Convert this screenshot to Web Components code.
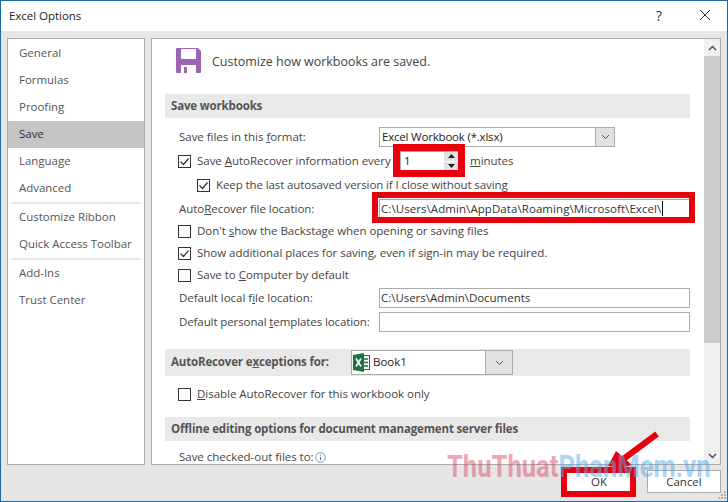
<!DOCTYPE html>
<html>
<head>
<meta charset="utf-8">
<title>Excel Options</title>
<style>
  html, body { margin: 0; padding: 0; background: #e6e6e6; overflow: hidden; }
  body { font: 11.5px "Open Sans", "Noto Sans", sans-serif; letter-spacing: -.03px; color: #444; }
</style>
</head>
<body>
<excel-dialog>
  <nav-list slot="nav">
    <nav-item>General</nav-item>
    <nav-item>Formulas</nav-item>
    <nav-item>Proofing</nav-item>
    <nav-item active>Save</nav-item>
    <nav-item>Language</nav-item>
    <nav-item>Advanced</nav-item>
    <nav-sep></nav-sep>
    <nav-item>Customize Ribbon</nav-item>
    <nav-item>Quick Access Toolbar</nav-item>
    <nav-sep></nav-sep>
    <nav-item>Add-Ins</nav-item>
    <nav-item>Trust Center</nav-item>
  </nav-list>

  <page-head>Customize how workbooks are saved.</page-head>

  <section-bar style="margin-top:21px">Save workbooks</section-bar>

  <form-row style="margin-top:9px;height:20px">
    <span>Save files in this <u>f</u>ormat:</span>
    <combo-box slot="control" style="width:236px">Excel Workbook (*.xlsx)</combo-box>
  </form-row>
  <check-row checked label-width="197" style="margin-top:2px;height:24px">
    Save <u>A</u>utoRecover information every
    <spin-box slot="after" value="1"></spin-box>
    <span slot="after" style="margin-left:10px;padding-bottom:2px"><u>m</u>inutes</span>
  </check-row>
  <check-row checked indent style="height:24px;letter-spacing:-.1px">Keep the last autosaved version if I close without saving</check-row>
  <form-row style="height:24px">
    <span>Auto<u>R</u>ecover file location:</span>
    <text-box slot="control" caret style="letter-spacing:.07px">C:\Users\Admin\AppData\Roaming\Microsoft\Excel\</text-box>
  </form-row>
  <check-row style="height:22px;margin-top:-1px">Don't <u>s</u>how the Backstage when opening or saving files</check-row>
  <check-row checked style="height:22px">Show additional places for saving, even if sign-in may be required.</check-row>
  <check-row style="height:22px">Save to <u>C</u>omputer by default</check-row>
  <form-row style="height:24px">
    <span>Default local f<u>i</u>le location:</span>
    <text-box slot="control">C:\Users\Admin\Documents</text-box>
  </form-row>
  <form-row style="height:24px">
    <span style="letter-spacing:-.1px">Default personal <u>t</u>emplates location:</span>
    <text-box slot="control"></text-box>
  </form-row>

  <section-bar tall style="margin-top:15px">
    <span>AutoRecover e<u>x</u>ceptions for:</span>
    <combo-box slot="control" workbook style="width:162px">Book1</combo-box>
  </section-bar>
  <check-row style="margin-top:7px;height:22px">
    <u>D</u>isable AutoRecover for this workbook only
  </check-row>
  <section-bar style="margin-top:12px">Offline editing options for document management server files</section-bar>
  <form-row style="margin-top:6px;height:20px">
    <span>Save checked-out files to:<info-icon></info-icon></span>
  </form-row>

  <dialog-button slot="buttons" style="margin-right:11px">OK</dialog-button>
  <dialog-button slot="buttons">Cancel</dialog-button>

  <red-box slot="marks" style="left:392px;top:143px;width:72px;height:33px;border-width:7px"></red-box>
  <red-box slot="marks" style="left:371px;top:191px;width:323px;height:31px"></red-box>
  <red-box slot="marks" style="left:560px;top:466px;width:75px;height:30px"></red-box>
  <red-arrow slot="marks"></red-arrow>
  <water-mark slot="marks"></water-mark>
  <size-grip slot="marks"></size-grip>
</excel-dialog>

<script>
// little helper, every element is the same boilerplate otherwise
function define(name, html) {
  customElements.define(name, class extends HTMLElement {
    constructor() {
      super();
      this.attachShadow({ mode: "open" });
      this.shadowRoot.innerHTML = typeof html === "function" ? html(this) : html;
    }
  });
}

define("excel-dialog", `
  <style>
    :host { display: block; position: relative; width: 728px; height: 502px; box-sizing: border-box;
      border: 1px solid #1f6aa5; background: #e6e6e6; overflow: hidden; }
    .title { height: 30px; box-sizing: border-box; padding: 0 0 2px 8px; background: #fff; display: flex; align-items: center; color: #222; }
    .title span { flex: 1; }
    .title b { font-weight: 400; width: 40px; text-align: center; color: #333; font-size: 14px; }
    .title svg { display: block; margin: 0 16px 0 20px; }
    .main { display: flex; gap: 6px; padding: 7px 6px 0 6px; height: 427px; }
    .nav { width: 138px; flex: none; background: #fff; border: 1px solid #ababab; box-sizing: border-box; }
    .content { flex: 1; background: #fff; border: 1px solid #ababab; box-sizing: border-box; display: flex; overflow: hidden; }
    .scroll { flex: 1; overflow: hidden; padding: 0 14px 0 13px; min-width: 0; }
    .bar { width: 16px; flex: none; background: #f0f0f0; display: flex; flex-direction: column; }
    .arrow { height: 17px; display: flex; align-items: center; justify-content: center; }
    .thumb { height: 287px; background: #cdcdcd; }
    .rest { flex: 1; }
    .buttons { display: flex; justify-content: flex-end; padding: 5px 6px 0 0; }
  </style>
  <div class="title"><span>Excel Options</span><b>?</b>
    <svg width="12" height="12" viewBox="0 0 12 12"><path d="M1 1l10 10M11 1L1 11" stroke="#333" stroke-width="1" fill="none"/></svg>
  </div>
  <div class="main">
    <div class="nav"><slot name="nav"></slot></div>
    <div class="content">
      <div class="scroll"><slot></slot></div>
      <div class="bar">
        <div class="arrow"><svg width="9" height="6" viewBox="0 0 9 6"><path d="M1 5l3.500-3.500L8 5" stroke="#555" stroke-width="1.500" fill="none"/></svg></div>
        <div class="thumb"></div>
        <div class="rest"></div>
        <div class="arrow"><svg width="9" height="6" viewBox="0 0 9 6"><path d="M1 1l3.500 3.500L8 1" stroke="#555" stroke-width="1.500" fill="none"/></svg></div>
      </div>
    </div>
  </div>
  <div class="buttons"><slot name="buttons"></slot></div>
  <slot name="marks"></slot>
`);

define("nav-list", `<style>:host { display: block; padding-top: 1px; }</style><slot></slot>`);

define("nav-item", `
  <style>
    :host { display: flex; align-items: center; height: 27px; box-sizing: border-box; padding: 0 0 2px 11px; color: #555; }
    :host([active]) { background: #c5c5c5; color: #333; }
  </style><slot></slot>`);

define("nav-sep", `<style>:host { display: block; height: 2px; margin: 0 3px; background: #e6e6e6; }</style>`);

define("page-head", `
  <style>
    :host { display: flex; align-items: center; gap: 11px; height: 26px; margin-top: 8px; padding-left: 11px;
      font-size: 12.5px; color: #444; }
    svg { display: block; flex: none; }
    span { padding-top: 2px; }
  </style>
  <svg width="25" height="25" viewBox="0 0 25 25">
    <path d="M1 0h21l3 3v21a1 1 0 0 1-1 1H1a1 1 0 0 1-1-1V1a1 1 0 0 1 1-1z" fill="#9c65b4"/>
    <rect x="5" y="1" width="15" height="10" fill="#fff"/>
    <rect x="5" y="17" width="15" height="8" fill="#fff"/>
    <rect x="8" y="19" width="3" height="6" fill="#9c65b4"/>
  </svg>
  <span><slot></slot></span>`);

define("section-bar", `
  <style>
    :host { display: flex; align-items: center; height: 24px; padding-left: 6px; background: #e9e9e9;
      font-weight: 700; letter-spacing: -.15px; color: #555; }
    :host([tall]) { height: 27px; }
    .label { flex: none; padding-bottom: 2px; }
    :host([tall]) .label { width: 180px; }
  </style>
  <div class="label"><slot></slot></div><slot name="control"></slot>`);

define("form-row", `
  <style>
    :host { display: flex; align-items: center; padding-left: 14px; color: #444; }
    .label { width: 200px; flex: none; white-space: nowrap; padding-bottom: 2px; }
    .ctl { flex: 1; display: flex; min-width: 0; }
  </style>
  <div class="label"><slot></slot></div><div class="ctl"><slot name="control"></slot></div>`);

define("check-row", el => `
  <style>
    :host { display: flex; align-items: center; gap: 6px; padding-left: ${el.hasAttribute("indent") ? 32 : 13}px; white-space: nowrap; color: #444; }
    svg { display: block; flex: none; }
    .label { flex: none; padding-bottom: 2px; ${el.hasAttribute("label-width") ? "width:" + el.getAttribute("label-width") + "px;" : ""} }
    .after { display: flex; align-items: center; }
  </style>
  <svg width="13" height="13" viewBox="0 0 13 13">
    <rect x=".5" y=".5" width="12" height="12" fill="#fff" stroke="#333"/>
    ${el.hasAttribute("checked") ? '<path d="M2.500 6.500l3 3 5-6" stroke="#333" stroke-width="1.200" fill="none"/>' : ""}
  </svg>
  <span class="label"><slot></slot></span><div class="after"><slot name="after"></slot></div>`);

define("combo-box", el => `
  <style>
    :host { display: flex; align-items: center; height: 20px; box-sizing: border-box; border: 1px solid #ababab;
      background: #fff; color: #222; font-weight: 400; letter-spacing: -.2px; }
    :host([workbook]) { height: 25px; letter-spacing: 0; }
    .text { flex: 1; padding-left: 2px; display: flex; align-items: center; gap: 3px; white-space: nowrap; }
    .text span { padding-bottom: 2px; }
    :host([workbook]) .text { padding-left: 1px; }
    .btn { width: 18px; align-self: stretch; background: #e1e1e1; border-left: 1px solid #ababab; display: flex; align-items: center; justify-content: center; }
    :host([workbook]) .btn { width: 26px; }
    svg { display: block; }
  </style>
  <div class="text">
    ${el.hasAttribute("workbook") ? `<svg width="17" height="19" viewBox="0 0 17 19">
      <rect x="9.500" y="2.500" width="7" height="14" fill="#fff" stroke="#207245"/>
      <path d="M11 6h4M11 9.500h4M11 13h4" stroke="#207245" stroke-width="1.500"/>
      <path d="M0 2l11-2v19L0 17z" fill="#207245"/>
      <path d="M3 5.500l5 8M8 5.500l-5 8" stroke="#fff" stroke-width="1.600" fill="none"/>
    </svg>` : ""}
    <span><slot></slot></span>
  </div>
  <div class="btn"><svg width="9" height="6" viewBox="0 0 9 6"><path d="M1 1l3.500 3.500L8 1" stroke="#555" fill="none"/></svg></div>`);

define("spin-box", el => `
  <style>
    :host { display: flex; align-items: center; width: 60px; height: 21px; box-sizing: border-box; border: 1px solid #ababab; background: #fff; color: #222; }
    .v { flex: 1; padding: 0 0 2px 3px; }
    .btns { width: 15px; align-self: stretch; display: flex; flex-direction: column; gap: 1px; background: #fff; }
    .btns div { flex: 1; background: #e1e1e1; display: flex; align-items: center; justify-content: center; }
    svg { display: block; }
  </style>
  <div class="v">${el.getAttribute("value")}</div>
  <div class="btns">
    <div><svg width="7" height="4" viewBox="0 0 7 4"><path d="M3.500 0L7 4H0z" fill="#222"/></svg></div>
    <div><svg width="7" height="4" viewBox="0 0 7 4"><path d="M3.500 4L7 0H0z" fill="#222"/></svg></div>
  </div>`);

define("text-box", el => `
  <style>
    :host { display: flex; align-items: center; flex: 1; height: 20px; box-sizing: border-box; border: 1px solid #ababab; background: #fff; color: #333; padding: 0 0 2px 1px; white-space: nowrap; }
    i { display: inline-block; width: 1px; height: 15px; background: #111; margin-left: 1px; }
  </style><slot></slot>${el.hasAttribute("caret") ? "<i></i>" : ""}`);

define("info-icon", `
  <style>:host { display: inline-block; vertical-align: -2px; margin-left: 1px; } svg { display: block; }</style>
  <svg width="11" height="11" viewBox="0 0 11 11">
    <circle cx="5.500" cy="5.500" r="4.800" fill="none" stroke="#6d9ccb"/>
    <path d="M5.500 4.800v3.400M5.500 2.600v1" stroke="#4a6f96" stroke-width="1"/>
  </svg>`);

define("dialog-button", `
  <style>
    :host { display: flex; align-items: center; justify-content: center; width: 74px; height: 23px; box-sizing: border-box;
      border: 1px solid #ababab; background: #fff; color: #333; }
  </style><slot></slot>`);

define("red-box", `
  <style>:host { display: block; position: absolute; box-sizing: border-box; border: 6px solid #e8000d; }</style>`);

define("red-arrow", `
  <style>:host { display: block; position: absolute; left: 603px; top: 427px; } svg { display: block; }</style>
  <svg width="56" height="48" viewBox="0 0 56 48">
    <path d="M53 6L18 32" stroke="#e8000d" stroke-width="6" fill="none"/>
    <path d="M4 38L12 23L28 37L16 40z" fill="#e8000d"/>
  </svg>`);

define("water-mark", `
  <style>
    :host { display: block; position: absolute; left: 446px; top: 449px; font: 700 32px/1 Roboto, sans-serif; letter-spacing: 0;
      white-space: nowrap; opacity: .5; pointer-events: none; transform: scaleX(.8); transform-origin: 0 0; }
    .a { color: #d9536e; } .b { color: #59aee6; }
  </style>
  <span class="a">ThuThuat</span><span class="b">PhanMem.vn</span>`);

define("size-grip", `
  <style>:host { display: block; position: absolute; right: 1px; bottom: 2px; } svg { display: block; }</style>
  <svg width="8" height="8" viewBox="0 0 8 8" fill="#b5b5b5">
    <rect x="6" y="0" width="2" height="2"/><rect x="3" y="3" width="2" height="2"/><rect x="6" y="3" width="2" height="2"/>
    <rect x="0" y="6" width="2" height="2"/><rect x="3" y="6" width="2" height="2"/><rect x="6" y="6" width="2" height="2"/>
  </svg>`);
</script>
</body>
</html>
